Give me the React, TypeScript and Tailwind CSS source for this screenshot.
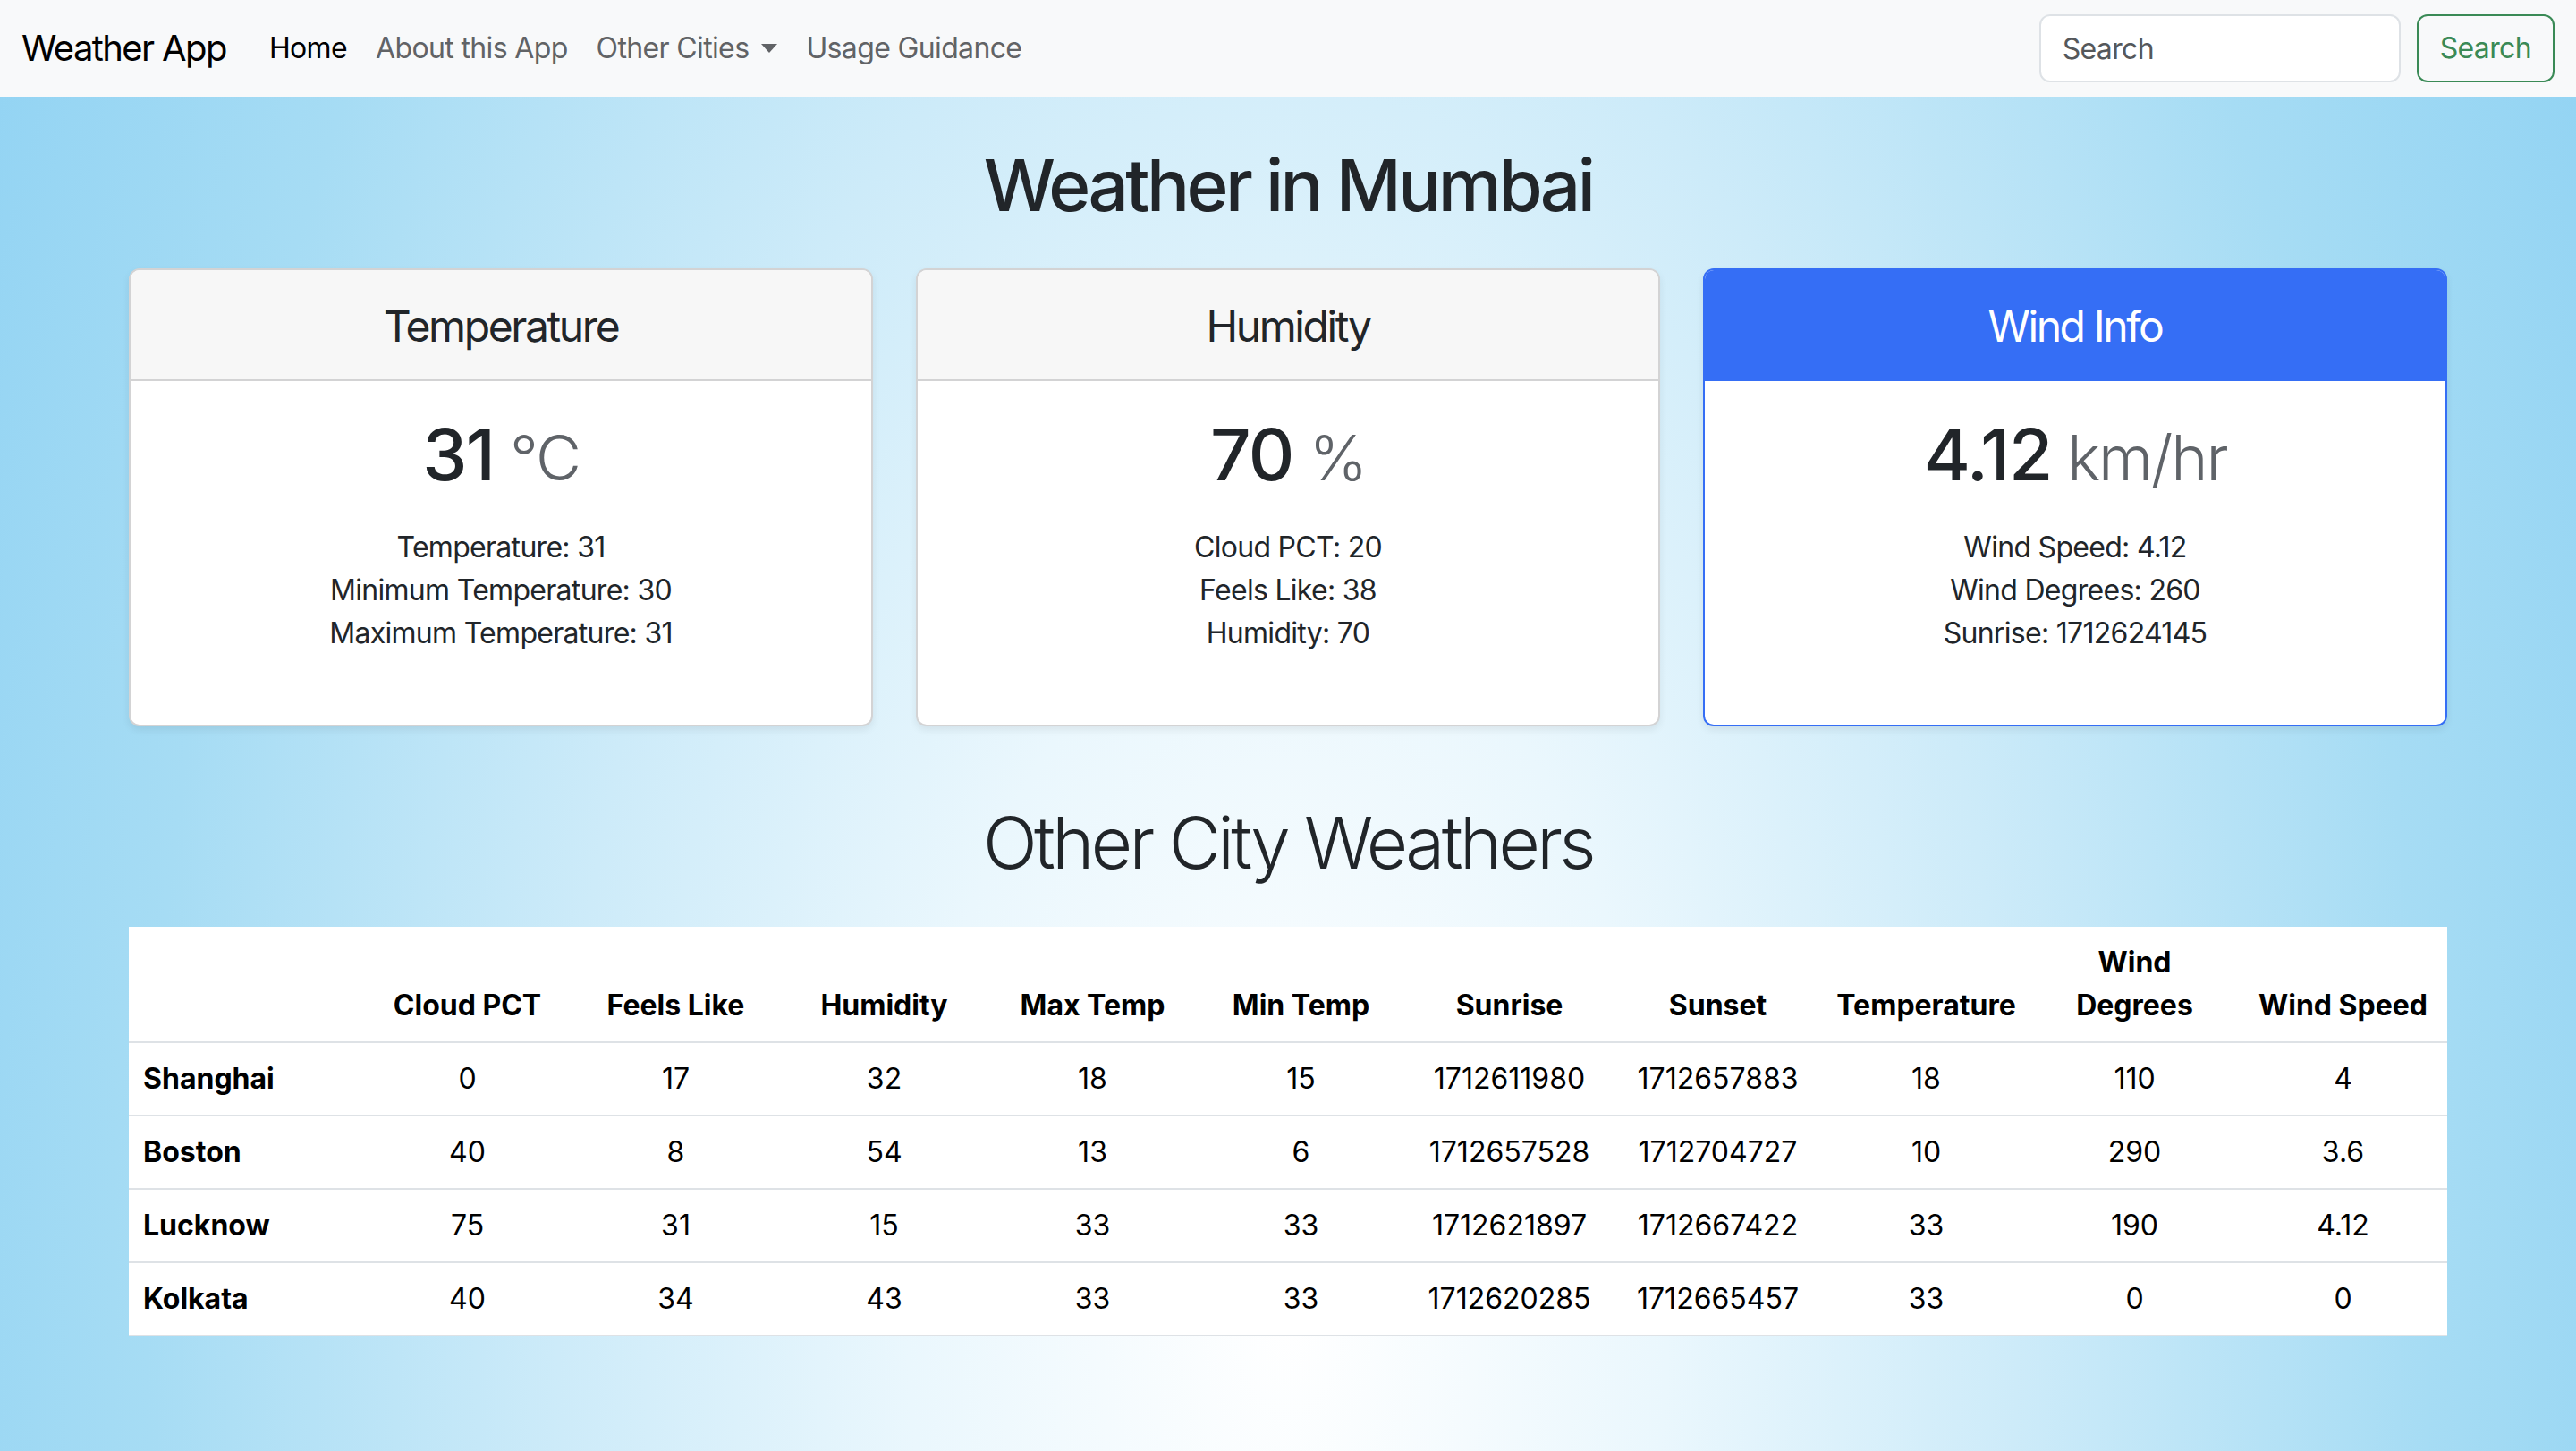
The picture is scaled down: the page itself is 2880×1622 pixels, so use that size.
import React from "react";

const font = { fontFamily: "Inter, 'Noto Sans', sans-serif" };

type Card = {
  title: string;
  value: string;
  unit: string;
  lines: string[];
  primary?: boolean;
};

const cards: Card[] = [
  {
    title: "Temperature",
    value: "31",
    unit: "°C",
    lines: ["Temperature: 31", "Minimum Temperature: 30", "Maximum Temperature: 31"],
  },
  {
    title: "Humidity",
    value: "70",
    unit: "%",
    lines: ["Cloud PCT: 20", "Feels Like: 38", "Humidity: 70"],
  },
  {
    title: "Wind Info",
    value: "4.12",
    unit: "km/hr",
    lines: ["Wind Speed: 4.12", "Wind Degrees: 260", "Sunrise: 1712624145"],
    primary: true,
  },
];

const rows: (string | number)[][] = [
  ["Shanghai", 0, 17, 32, 18, 15, 1712611980, 1712657883, 18, 110, 4],
  ["Boston", 40, 8, 54, 13, 6, 1712657528, 1712704727, 10, 290, 3.6],
  ["Lucknow", 75, 31, 15, 33, 33, 1712621897, 1712667422, 33, 190, 4.12],
  ["Kolkata", 40, 34, 43, 33, 33, 1712620285, 1712665457, 33, 0, 0],
];

const headers = [
  "Cloud PCT",
  "Feels Like",
  "Humidity",
  "Max Temp",
  "Min Temp",
  "Sunrise",
  "Sunset",
  "Temperature",
  "Wind Degrees",
  "Wind Speed",
];

function WeatherCard({ card }: { card: Card }) {
  return (
    <div
      className={
        card.primary
          ? "flex flex-col rounded-[12px] border-2 border-[#356ef5] bg-white text-center shadow-[0_4px_8px_rgba(0,0,0,0.075)]"
          : "flex flex-col rounded-[12px] border-2 border-[#d3d3d4] bg-white text-center shadow-[0_4px_8px_rgba(0,0,0,0.075)]"
      }
    >
      <div
        className={
          card.primary
            ? "rounded-t-[10px] border-b-2 border-[#356ef5] bg-[#356ef5] pt-[34px] pb-[30px] text-white"
            : "rounded-t-[10px] border-b-2 border-[#d3d3d4] bg-[#f7f7f7] pt-[34px] pb-[30px] text-[#212529]"
        }
      >
        <h4 className="text-[48px] font-normal leading-[1.2] tracking-[-0.05em]">{card.title}</h4>
      </div>
      <div className="px-[32px] pt-[34px] pb-[32px]">
        <h1 className="mb-[32px] text-[80px] font-medium leading-[1.2] tracking-[-0.02em] text-[#212529]">
          {card.value}
          <small className="text-[70px] font-light tracking-[-0.03em] text-[#5f6368]"> {card.unit}</small>
        </h1>
        <ul className="mb-[46px] text-[32px] leading-[48px] tracking-[-0.022em] text-[#212529]">
          {card.lines.map((l) => (
            <li key={l}>{l}</li>
          ))}
        </ul>
      </div>
    </div>
  );
}

export default function App() {
  return (
    <div
      style={font}
      className="min-h-[1622px] w-full bg-[radial-gradient(ellipse_1700px_3200px_at_50%_90%,#ffffff_0%,#eaf7fd_25%,#cdebf9_48%,#a6dcf4_75%,#8fd2f3_100%)]"
    >
      <nav className="flex h-[108px] items-center bg-[#f8f9fa] px-[24px]">
        <a className="mr-[32px] text-[40px] leading-[1.5] tracking-[-0.04em] text-black">Weather App</a>
        <ul className="flex items-center text-[32px] leading-[48px] tracking-[-0.02em]">
          <li>
            <a className="block px-[16px] text-black">Home</a>
          </li>
          <li>
            <a className="block px-[16px] text-[#616366]">About this App</a>
          </li>
          <li>
            <a className="flex items-center px-[16px] text-[#616366]">
              Other Cities
              <span className="ml-[14px] inline-block h-0 w-0 border-x-[9px] border-t-[10px] border-x-transparent border-t-[#616366]" />
            </a>
          </li>
          <li>
            <a className="block px-[16px] text-[#616366]">Usage Guidance</a>
          </li>
        </ul>
        <form className="ml-auto flex items-center gap-[18px]">
          <input
            className="h-[76px] w-[404px] rounded-[12px] border-2 border-[#dee2e6] bg-white px-[24px] text-[32px] tracking-[-0.02em] text-[#212529] outline-none placeholder:text-[#55585b]"
            placeholder="Search"
          />
          <button
            type="button"
            className="h-[76px] rounded-[12px] border-2 border-[#3a8a56] px-[24px] text-[32px] tracking-[-0.02em] text-[#3a8a56]"
          >
            Search
          </button>
        </form>
      </nav>

      <main className="mx-auto w-[2592px]">
        <h1 className="mt-[51px] mb-[45px] text-center text-[80px] font-medium leading-[1.2] tracking-[-0.045em] text-[#212529]">
          Weather in Mumbai
        </h1>

        <div className="grid grid-cols-3 gap-[48px]">
          {cards.map((c) => (
            <WeatherCard key={c.title} card={c} />
          ))}
        </div>

        <h2 className="mt-[82px] mb-[46px] text-center text-[80px] font-light leading-[1.2] tracking-[-0.045em] text-[#212529]">
          Other City Weathers
        </h2>

        <table className="w-full table-fixed border-collapse bg-white text-[32px] leading-[48px] text-black">
          <colgroup>
            <col className="w-[262px]" />
            {headers.map((h) => (
              <col key={h} />
            ))}
          </colgroup>
          <thead>
            <tr className="border-b-2 border-[#dee2e6]">
              <th className="px-[16px] py-[16px]" />
              {headers.map((h) => (
                <th
                  key={h}
                  className="px-[16px] py-[16px] text-center align-bottom font-bold"
                >
                  {h}
                </th>
              ))}
            </tr>
          </thead>
          <tbody>
            {rows.map((r) => (
              <tr key={String(r[0])} className="border-b-2 border-[#dee2e6]">
                <th className="px-[16px] py-[16px] text-left font-bold">{r[0]}</th>
                {r.slice(1).map((v, i) => (
                  <td key={i} className="px-[16px] py-[16px] text-center">
                    {v}
                  </td>
                ))}
              </tr>
            ))}
          </tbody>
        </table>
      </main>
    </div>
  );
}
